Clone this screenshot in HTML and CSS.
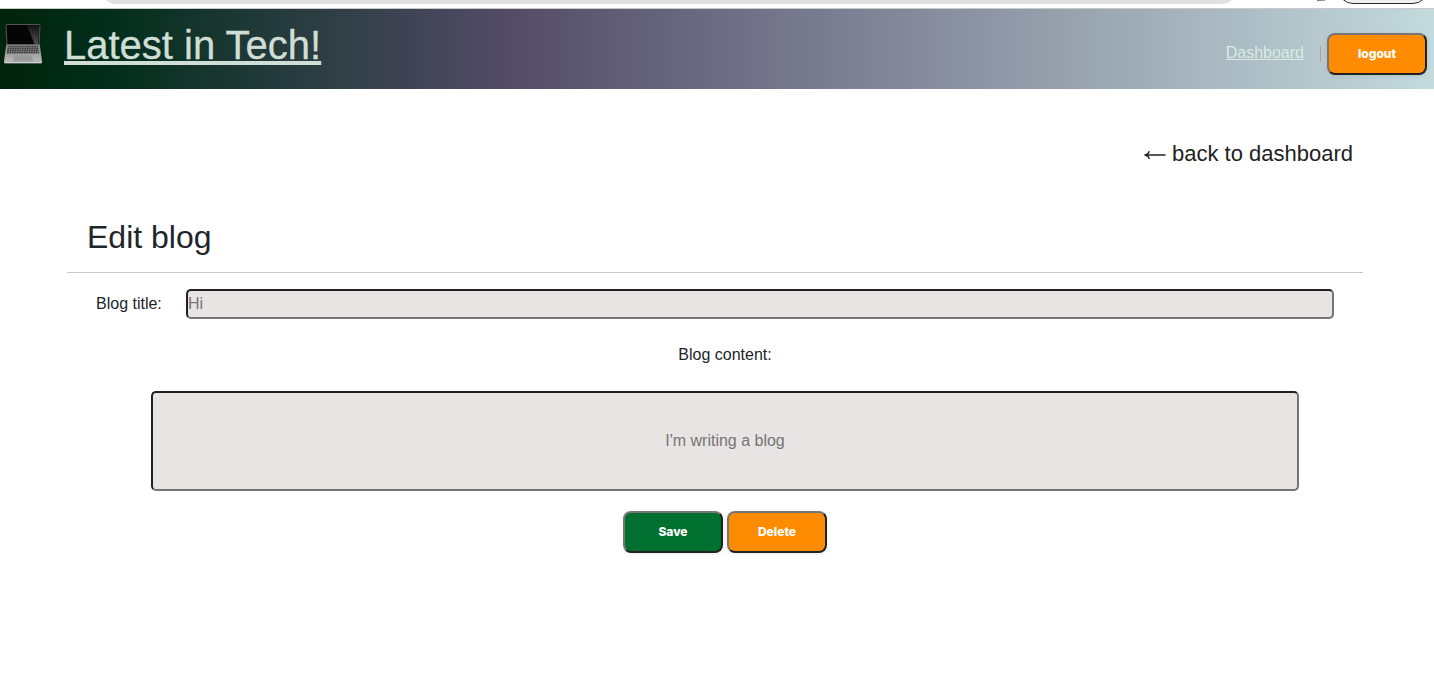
FILE: index.html
```html
<!DOCTYPE html>
<html lang="en">
<head>
<meta charset="utf-8">
<title>Edit blog</title>
<link rel="stylesheet" href="styles.css">
</head>
<body>
<div class="chrome"><span class="address"></span><span class="avatar"></span><span class="chip"></span></div>
<header class="header">
  <svg class="laptop" width="40" height="42" viewBox="0 0 40 42">
    <defs>
      <linearGradient id="base" x1="0" y1="0" x2="0" y2="1"><stop offset="0" stop-color="#858585"/><stop offset="1" stop-color="#bdbdbd"/></linearGradient>
      <linearGradient id="shine" x1="0" y1="0" x2="0" y2="1"><stop offset="0" stop-color="#161616"/><stop offset="1" stop-color="#4d4d4d"/></linearGradient>
    </defs>
    <path d="M3 1.5Q3 .5 4 .5H36Q37 .5 37 1.5L36 21H4Z" fill="#050505" stroke="#626965" stroke-width=".8"/>
    <path d="M24 1.5H36L35.2 20H31.5Z" fill="url(#shine)"/>
    <path d="M3.2 20.5H36.8L39 37.5Q39 39.3 38 39.3H2Q1 39.3 1 37.5Z" fill="url(#base)"/>
    <path d="M4.5 21.5H35.5L36.5 29.5H3.5Z" fill="#777"/>
    <path d="M5 22.8H35M4.6 24.8H35.4M4.3 26.8H35.7M4 28.7H36" stroke="#282828" stroke-width="1.1" stroke-dasharray="1.6 .8"/>
    <path d="M11 31.2H29L30 37.5H10Z" fill="#999"/>
    <path d="M1.2 38.7H38.8" stroke="#d0d0d0"/>
  </svg>
  <a class="brand">Latest in Tech!</a>
  <nav class="nav"><a class="nav-link">Dashboard</a><span class="divider"></span><button class="btn orange">logout</button></nav>
</header>
<main class="main">
  <a class="back"><svg class="arrow" width="22" height="12" viewBox="0 0 22 12"><path d="M1.5 6H21.5M5.5 2.3Q4.5 5 1.3 6Q4.5 7 5.5 9.7" fill="none" stroke="#231f20" stroke-width="1.4"/></svg><span>back to dashboard</span></a>
  <h2 class="heading">Edit blog</h2>
  <form class="form">
    <div class="row"><label class="label">Blog title:</label><input class="field title" placeholder="Hi"></div>
    <label class="content-label">Blog content:</label>
    <input class="field content" placeholder="I'm writing a blog">
    <div class="actions"><button type="button" class="btn green">Save</button><button type="button" class="btn orange">Delete</button></div>
  </form>
</main>
</body>
</html>
```
FILE: styles.css
```css
* { box-sizing: border-box; }
body { margin: 0; height: 691px; overflow: hidden; background: #fff; color: #212529; font: 16px/24px "Liberation Sans", Arial, sans-serif; }
.chrome { height: 9px; display: flex; align-items: flex-start; padding-left: 102px; border-bottom: 1px solid #c9c9c9; overflow: hidden; }
.address { width: 1134px; height: 28px; margin-top: -24px; border-radius: 14px; background: #e0e0e0; flex: none; }
.avatar { width: 8px; height: 1px; margin-left: 81px; background: linear-gradient(90deg, #777780, #c79b78); }
.chip { width: 90px; height: 30px; margin: -26px 0 0 13px; border: 1px solid #292b30; border-radius: 15px; background: #f0f0f2; flex: none; }
.header { height: 80px; display: flex; align-items: flex-start; padding: 0 7px 0 3px; background: linear-gradient(90deg, #00240b 0%, #002d19 7%, #524b66 35%, #c4dadd 100%); }
.laptop { flex: none; margin-top: 15px; }
.brand { margin: 12px 0 0 21px; font-size: 40px; line-height: 48px; color: #d0dfd6; -webkit-text-stroke: .3px #d0dfd6; text-decoration: underline; text-decoration-thickness: 4px; text-underline-offset: 2px; text-decoration-skip-ink: none; white-space: nowrap; }
.nav { display: flex; margin-left: auto; padding-top: 24px; }
.nav-link { margin-top: 8px; color: #daeae3; text-decoration: underline; text-decoration-skip-ink: none; }
.divider { width: 1px; height: 16px; margin: 13px 6px 0 16px; background: #c29b97; }
.btn { width: 100px; height: 42px; padding: 0; border: 2px solid; border-color: #757575 #212121 #212121 #757575; border-radius: 8px; color: #fff; font: 800 12px/16px Inter, sans-serif; box-shadow: 0 1px 5px rgba(0, 0, 0, .08); }
.orange { background: #ff8c00; }
.green { background: #007031; }
.main { display: flex; flex-direction: column; padding: 48px 71px 0 67px; }
.back { display: flex; align-items: center; gap: 6px; align-self: flex-end; margin-right: 10px; height: 33px; font-size: 22px; color: #231f20; }
.arrow { margin-top: 3px; }
.heading { margin: 40px 0 0; height: 63px; padding: 8px 20px 0; border-bottom: 1px solid #c8c8c8; font-size: 32px; font-weight: 400; line-height: 38px; }
.form { display: flex; flex-direction: column; padding: 16px 29px 0; }
.row { display: flex; align-items: center; }
.label { width: 90px; }
.field { border: 2px solid; border-color: #212121 #757575 #757575 #212121; border-radius: 5px; padding: 0; background: #e8e4e3; font: inherit; outline: none; }
.field::placeholder { color: #757575; opacity: 1; }
.title { width: 1148px; height: 30px; }
.content-label { align-self: center; margin: 24px 0 24px 20px; }
.content { width: 1148px; height: 100px; margin-left: 55px; text-align: center; }
.actions { display: flex; justify-content: center; gap: 4px; margin: 20px 0 0 20px; }
```
